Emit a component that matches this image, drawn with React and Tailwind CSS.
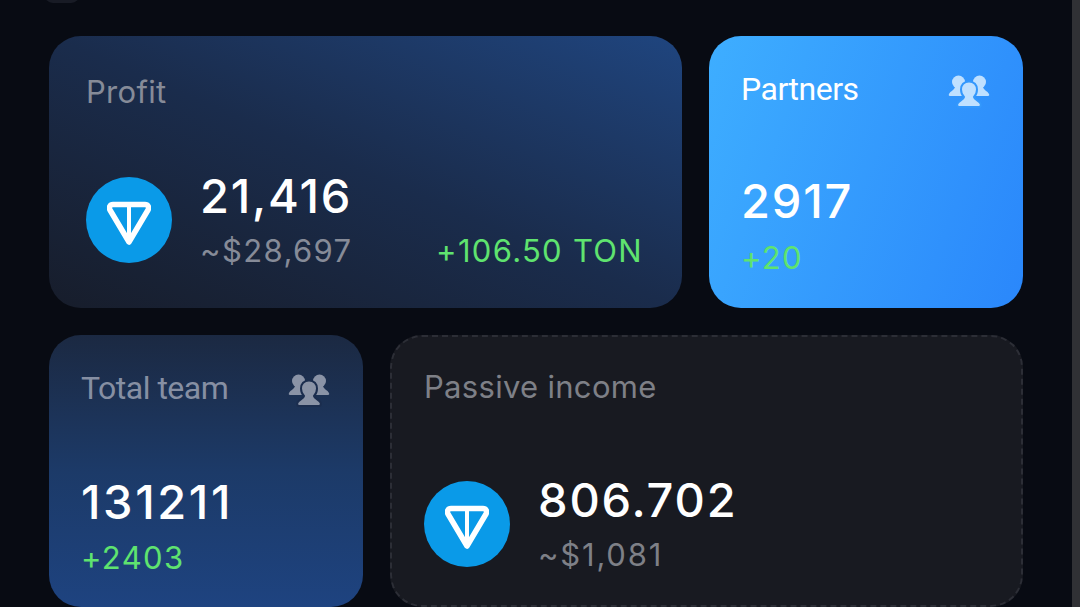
const TonIcon = () => (
  <div className="w-[86px] h-[86px] rounded-full bg-[#0a9ae8] flex items-center justify-center shrink-0">
    <svg width="44" height="46" viewBox="0 0 44 46" fill="none" stroke="#fff" strokeWidth="5.5" strokeLinejoin="round" strokeLinecap="round" className="mt-[7px]">
      <path d="M6 4.500 H38 C41 4.500 42.500 7.500 41 10 L22 42 L3 10 C1.500 7.500 3 4.500 6 4.500 Z" />
      <path d="M22 5 V41" strokeWidth="4" />
    </svg>
  </div>
);

const TeamIcon = ({ color, gap }) => (
  <svg width="42" height="33" viewBox="0 0 42 33" fill={color} className="mt-[6px]">
    <circle cx="10.500" cy="7" r="6.500" />
    <path d="M1 19 C2 16.500 6 15.500 7 12 H14 C15 15.500 17 17 18 20 V21 H2 C0.800 21 0.500 20 1 19 Z" />
    <circle cx="31.500" cy="7" r="6.500" />
    <path d="M41 19 C40 16.500 36 15.500 35 12 H28 C27 15.500 25 17 24 20 V21 H40 C41.200 21 41.500 20 41 19 Z" />
    <path stroke={gap} strokeWidth="2" d="M21 6.500 C26 6.500 29 10 29 14.500 C29 18 27.500 20.500 26 22 C26.500 25 31 25.500 32.500 28.500 C33.300 30.500 32.500 32 31 32 H11 C9.500 32 8.700 30.500 9.500 28.500 C11 25.500 15.500 25 16 22 C14.500 20.500 13 18 13 14.500 C13 10 16 6.500 21 6.500 Z" />
  </svg>
);

const inter = "font-['Inter','Liberation_Sans',sans-serif]";
const roboto = "font-['Roboto','Liberation_Sans',sans-serif]";

export default function App() {
  return (
    <div className={`relative h-[607px] w-[1080px] overflow-hidden bg-[#080b13] pl-[49px] pt-[36px] ${inter}`}>
      <div className="absolute left-[44px] top-[-15px] w-[36px] h-[18px] rounded-full bg-[#181b25]" />
      <div className="absolute right-0 top-0 bottom-0 w-[8px] bg-[#303135]" />
      <div className="flex w-[974px] flex-col gap-[27px]">
        <div className="flex gap-[27px]">
          <div className="flex-1 h-[272px] rounded-[32px] bg-gradient-to-tr from-[#171d2b] via-[#1a2c4c] to-[#1f457f] pl-[37px] pr-[39px] pt-[38px] flex flex-col">
            <div className="text-[31px] leading-[36px] tracking-[0.3px] text-[#868b98]">Profit</div>
            <div className="mt-[59px] flex items-center">
              <TonIcon />
              <div className="ml-[28px] flex-1">
                <div className="text-[47px] leading-[54px] font-medium tracking-[1.8px] text-white">21,416</div>
                <div className="mt-[9px] flex justify-between items-baseline">
                  <span className="text-[31px] leading-[38px] tracking-[1.4px] text-[#868b98]">~$28,697</span>
                  <span className="text-[31px] leading-[38px] tracking-[1.3px] text-[#5fe36f]">+106.50 TON</span>
                </div>
              </div>
            </div>
          </div>

          <div className="w-[314px] h-[272px] rounded-[32px] bg-linear-[110deg] from-[#3eaeff] to-[#2a87fb] pl-[32px] pr-[33px] pt-[33px] flex flex-col">
            <div className="flex justify-between items-start">
              <span className={`${roboto} text-[32px] leading-[40px] tracking-[-0.5px] text-white`}>Partners</span>
              <TeamIcon color="#bfe0ff" gap="#3398fd" />
            </div>
            <div className="mt-[63px] text-[47px] leading-[58px] font-medium tracking-[1.8px] text-white">2917</div>
            <div className="mt-[8px] text-[31px] leading-[40px] tracking-[1.3px] text-[#5fe36f]">+20</div>
          </div>
        </div>

        <div className="flex gap-[27px]">
          <div className="w-[314px] h-[272px] rounded-[32px] bg-gradient-to-b from-[#1b2942] via-[#1c3a68] to-[#1e4380] pl-[32px] pr-[33px] pt-[33px] flex flex-col">
            <div className="flex justify-between items-start">
              <span className={`${roboto} text-[32px] leading-[40px] tracking-[-0.5px] text-[#868fa3]`}>Total team</span>
              <TeamIcon color="#8a93a6" gap="#1b2d4e" />
            </div>
            <div className="mt-[65px] text-[47px] leading-[58px] font-medium tracking-[2.6px] text-white">131211</div>
            <div className="mt-[7px] text-[31px] leading-[40px] tracking-[1.4px] text-[#5fe36f]">+2403</div>
          </div>

          <div className="flex-1 h-[272px] rounded-[32px] border-2 border-dashed border-[#2c2e36] bg-[#181a21] pl-[32px] pt-[32px] flex flex-col">
            <div className="text-[31px] leading-[36px] tracking-[0.3px] text-[#7e8087]">Passive income</div>
            <div className="mt-[68px] flex items-center">
              <TonIcon />
              <div className="ml-[28px]">
                <div className="text-[47px] leading-[54px] font-medium tracking-[1.8px] text-white">806.702</div>
                <div className="mt-[9px] text-[31px] leading-[38px] tracking-[1.8px] text-[#7e8087]">~$1,081</div>
              </div>
            </div>
          </div>
        </div>
      </div>
    </div>
  );
}
